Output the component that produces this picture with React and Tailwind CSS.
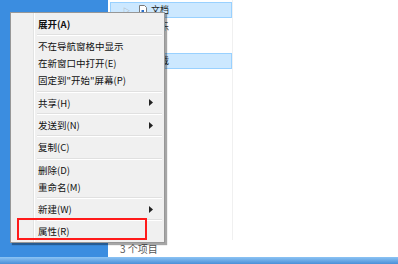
import React from 'react'

const font = { fontFamily: '"Noto Sans CJK SC", "Noto Sans", sans-serif' }

const menu = [
  { label: '展开(A)', bold: true },
  'sep',
  { label: '不在导航窗格中显示' },
  { label: '在新窗口中打开(E)' },
  { label: '固定到"开始"屏幕(P)' },
  'sep',
  { label: '共享(H)', sub: true },
  'sep',
  { label: '发送到(N)', sub: true },
  'sep',
  { label: '复制(C)' },
  'sep',
  { label: '删除(D)' },
  { label: '重命名(M)' },
  'sep',
  { label: '新建(W)', sub: true },
  'sep',
  { label: '属性(R)' },
]

function Arrow() {
  return (
    <svg width="4" height="7" viewBox="0 0 4 7" className="mr-[9px]">
      <path d="M0 0 L4 3.5 L0 7 Z" fill="#222" />
    </svg>
  )
}

function NavRow({ selected, label, doc }) {
  return (
    <div
      className={
        'h-[16px] flex items-center ' +
        (selected ? 'bg-[#cce8ff] border border-[#99d1ff]' : 'border border-transparent')
      }
    >
      <span className="w-[14px] ml-[12px] text-[7px] text-[#a0a0a0]">{doc ? '▷' : ''}</span>
      <span className="w-[12px] flex justify-center">
        {doc && (
          <svg width="8" height="11" viewBox="0 0 8 11">
            <path d="M0.5 0.5 H5.5 L7.5 2.5 V10.5 H0.5 Z" fill="#fff" stroke="#7a7a7a" />
            <rect x="2.5" y="5" width="2.5" height="2.5" fill="#2a6fc9" />
          </svg>
        )}
      </span>
      <span className="ml-[2px] text-[9px] text-[#1e1e1e]">{label}</span>
    </div>
  )
}

export default function App() {
  return (
    <div className="relative w-[398px] h-[264px] overflow-hidden bg-[#3b8de0]" style={font}>
      <div className="flex flex-col h-full">
        <div className="flex flex-1">
          <div className="w-[108px]" />
          <div className="flex-1 flex flex-col bg-white">
            <div className="flex flex-1">
              <div className="w-[125px] border-r border-[#f0f0f0] pt-[2px] pl-[2px] flex flex-col gap-[1px]">
                <NavRow selected doc label="文档" />
                <NavRow label="音乐" />
                <NavRow label="库" />
                <NavRow selected label="下载" />
              </div>
              <div className="flex-1" />
            </div>
            <div className="h-[17px] flex items-center pl-[12px] text-[10px] text-[#555]">3 个项目</div>
          </div>
        </div>
        <div className="h-[7px] bg-gradient-to-b from-[#8cc4f4] to-[#4a8fd8]" />
      </div>

      {/* context menu */}
      <div className="absolute left-[10px] top-[12px] w-[155px] bg-[#f0f0f0] border border-[#979797] shadow-[2px_2px_1px_rgba(0,0,0,0.35)] py-[2px] px-[2px]">
        <div className="absolute left-[22px] top-0 bottom-0 w-[1px] bg-[#e2e3e3]" />
        <div className="absolute left-[23px] top-0 bottom-0 w-[1px] bg-white" />
        {menu.map((m, i) =>
          m === 'sep' ? (
            <div key={i} className="h-[5px] flex flex-col justify-center ml-[24px]">
              <div className="h-[1px] bg-[#e0e0e0]" />
              <div className="h-[1px] bg-white" />
            </div>
          ) : (
            <div key={i} className="h-[17.3px] flex items-center justify-between pl-[25px]">
              <span className={'text-[9.5px] text-[#111] ' + (m.bold ? 'font-bold' : '')}>{m.label}</span>
              {m.sub && <Arrow />}
            </div>
          )
        )}
      </div>

      {/* highlight annotation */}
      <div className="absolute left-[17px] top-[218px] w-[130px] h-[22px] border-2 border-[#ff1a1a]" />
    </div>
  )
}
